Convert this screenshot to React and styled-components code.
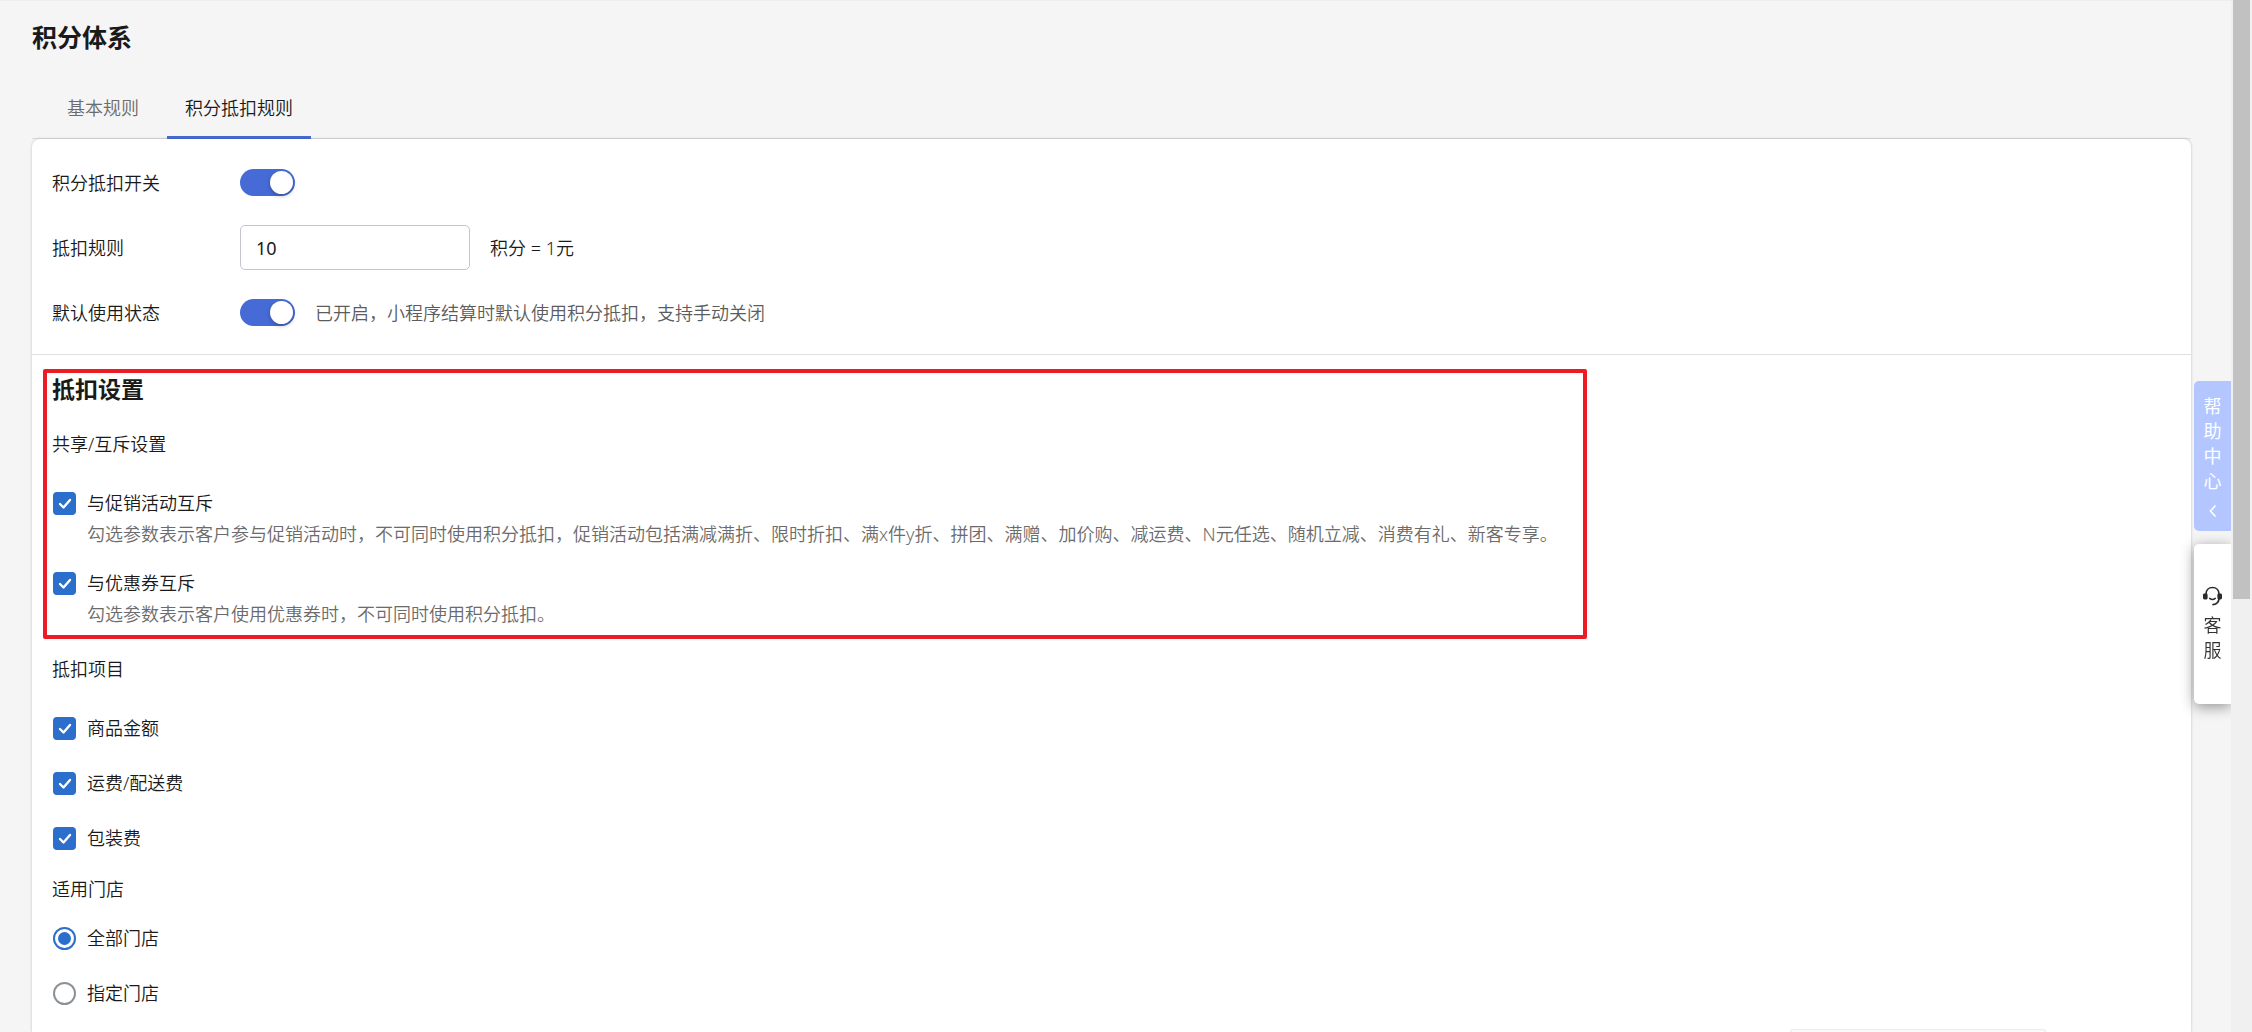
import React, { useState } from "react";
import styled, { createGlobalStyle } from "styled-components";

const GlobalStyle = createGlobalStyle`
  *, *::before, *::after { box-sizing: border-box; }
  body {
    margin: 0;
    background: #f5f5f5;
    color: #1a1a1a;
    font-family: "Noto Sans", "Noto Sans CJK SC", sans-serif;
    font-size: 18px;
    font-weight: 350;
    line-height: 24px;
  }
  h1, h2, h3, p { margin: 0; }
  button, input { font: inherit; color: inherit; }
`;

const Page = styled.div`
  display: flex;
  height: 100vh;
  overflow: hidden;
`;

const Main = styled.main`
  display: flex;
  flex: 1;
  flex-direction: column;
  min-width: 0;
  padding: 0 40px 0 32px;
  border-top: 1px solid #eeeeee;
`;

const PageTitle = styled.h1`
  padding-top: 20px;
  font-size: 25px;
  line-height: 32px;
  font-weight: 700;
`;

const TabList = styled.div`
  display: flex;
  gap: 10px;
  margin-top: 22px;
  padding-left: 17px;
  border-bottom: 1px solid #dddddd;
`;

const Tab = styled.button`
  height: 64px;
  margin-bottom: -1px;
  padding: 4px 18px 0;
  border: 0;
  border-bottom: 3px solid ${(p) => (p.$active ? "#466bd6" : "transparent")};
  border-radius: 2px 2px 0 0;
  background: none;
  color: ${(p) => (p.$active ? "#1a1a1a" : "#6b6b6b")};
`;

const Card = styled.div`
  flex: 1 0 auto;
  border-radius: 8px 8px 0 0;
  background: #ffffff;
  box-shadow: 0 0 3px rgba(0, 0, 0, 0.22);
`;

const RuleSection = styled.section`
  padding: 11px 20px 9px;
  border-bottom: 1px solid #e0e0e0;
`;

const FormRow = styled.div`
  display: flex;
  align-items: center;
  gap: 20px;
  height: 65px;
`;

const RowLabel = styled.label`
  width: 168px;
`;

const Hint = styled.span`
  color: #5c5c5c;
`;

const Switch = styled.input`
  display: flex;
  width: 55px;
  height: 27px;
  margin: 0;
  padding: 2px;
  justify-content: ${(p) => (p.checked ? "flex-end" : "flex-start")};
  appearance: none;
  border-radius: 14px;
  background: ${(p) => (p.checked ? "#466bd6" : "#bdbdbd")};
  cursor: pointer;

  &::before {
    content: "";
    width: 23px;
    height: 23px;
    border-radius: 50%;
    background: #ffffff;
    box-shadow: 0 2px 4px rgba(0, 0, 0, 0.25);
  }
`;

const TextInput = styled.input`
  width: 230px;
  height: 45px;
  padding: 0 15px;
  border: 1px solid #c2c5cb;
  border-radius: 5px;
  background: #ffffff;
  font-weight: 400;
`;

const SettingSection = styled.section`
  position: relative;
  padding: 18px 20px 0;
`;

const SectionTitle = styled.h2`
  font-size: 23px;
  line-height: 32px;
  font-weight: 700;
`;

const GroupTitle = styled.h3`
  padding-top: ${(p) => p.$space}px;
  font-size: 18px;
  line-height: 24px;
  font-weight: 350;
`;

const OptionList = styled.div`
  display: flex;
  flex-direction: column;
  gap: ${(p) => p.$gap}px;
  padding-top: ${(p) => p.$space}px;
`;

const Option = styled.div`
  display: grid;
  grid-template-columns: 25px 1fr;
  column-gap: 10px;
  align-items: center;
  justify-items: start;
`;

const OptionNote = styled.p`
  grid-column: 2;
  margin-top: 7px;
  color: #6b6b6b;
`;

const TickBox = styled.span`
  display: grid;
  justify-self: center;

  & > * { grid-area: 1 / 1; }
`;

const Checkbox = styled.input`
  width: 23px;
  height: 23px;
  margin: 0;
  appearance: none;
  border: 2px solid ${(p) => (p.checked ? "#2c6ecb" : "#8c9196")};
  border-radius: 4px;
  background: ${(p) => (p.checked ? "#2c6ecb" : "#ffffff")};
`;

const Tick = styled.svg`
  pointer-events: none;
  visibility: ${(p) => (p.$shown ? "visible" : "hidden")};
`;

const Radio = styled.input`
  display: grid;
  place-items: center;
  justify-self: center;
  width: 23px;
  height: 23px;
  margin: 0;
  appearance: none;
  border: 2px solid ${(p) => (p.checked ? "#2c6ecb" : "#8c9196")};
  border-radius: 50%;
  background: #ffffff;

  &::before {
    content: "";
    width: 13px;
    height: 13px;
    border-radius: 50%;
    background: ${(p) => (p.checked ? "#2c6ecb" : "transparent")};
  }
`;

const Highlight = styled.div`
  position: absolute;
  top: 14px;
  left: 11px;
  width: 1544px;
  max-width: calc(100% - 22px);
  height: 270px;
  border: 4px solid #ed1c24;
  border-radius: 2px;
  pointer-events: none;
`;

const ScrollTrack = styled.div`
  width: 21px;
  padding: 0 2px;
  background: #f0f0f0;
`;

const ScrollThumb = styled.div`
  height: 58vh;
  background: #c1c1c1;
`;

const SideDock = styled.div`
  position: fixed;
  top: 381px;
  right: 21px;
  display: flex;
  flex-direction: column;
  gap: 13px;
`;

const SideButton = styled.button`
  display: flex;
  flex-direction: column;
  align-items: center;
  justify-content: center;
  gap: ${(p) => (p.$primary ? 0 : 7)}px;
  width: 37px;
  height: ${(p) => p.$height}px;
  padding: 0 9px;
  border: 0;
  border-radius: 5px 0 0 5px;
  background: ${(p) => (p.$primary ? "#b3c6ff" : "#ffffff")};
  box-shadow: ${(p) => (p.$primary ? "none" : "0 3px 14px rgba(0, 0, 0, 0.4)")};
  clip-path: inset(-30px 0 -30px -30px);
  color: ${(p) => (p.$primary ? "#ffffff" : "#333333")};
  font-weight: ${(p) => (p.$primary ? 400 : 350)};
  line-height: 25px;
`;

const SaveBar = styled.div`
  position: fixed;
  right: 206px;
  bottom: 0;
  width: 256px;
  height: 3px;
  border: 1px solid #ececec;
  border-bottom: 0;
  border-radius: 6px 6px 0 0;
  background: #fafafa;
`;

function CheckOption({ id, label, note }) {
  const [checked, setChecked] = useState(true);
  return (
    <Option>
      <TickBox>
        <Checkbox id={id} type="checkbox" checked={checked} onChange={() => setChecked(!checked)} />
        <Tick $shown={checked} width="23" height="23" viewBox="0 0 23 23" aria-hidden="true">
          <path d="M7 12 L10.5 15.5 L17 8" fill="none" stroke="#fff" strokeWidth="2.4" strokeLinecap="round" strokeLinejoin="round" />
        </Tick>
      </TickBox>
      <label htmlFor={id}>{label}</label>
      {note && <OptionNote>{note}</OptionNote>}
    </Option>
  );
}

function RadioOption({ id, label, value, selected, onSelect }) {
  return (
    <Option>
      <Radio id={id} type="radio" name="store" checked={selected === value} onChange={() => onSelect(value)} />
      <label htmlFor={id}>{label}</label>
    </Option>
  );
}

function HeadsetIcon() {
  return (
    <svg width="19" height="20" viewBox="0 0 19 20" aria-hidden="true">
      <path d="M3 8 C3 4 5.8 1.5 9.5 1.5 C13.2 1.5 16 4 16 8" fill="none" stroke="#2b2b2b" strokeWidth="1.7" />
      <path d="M16 12 C16 16 13.5 18.3 10 18.6" fill="none" stroke="#2b2b2b" strokeWidth="1.7" strokeLinecap="round" />
      <path d="M6.8 12.4 Q9.5 14.6 12.2 12.4" fill="none" stroke="#2b2b2b" strokeWidth="1.6" strokeLinecap="round" />
      <rect x="0" y="7.5" width="4.6" height="6" rx="1.4" fill="#2b2b2b" />
      <rect x="14.4" y="7.5" width="4.6" height="6" rx="1.4" fill="#2b2b2b" />
    </svg>
  );
}

function ChevronIcon() {
  return (
    <svg width="18" height="25" viewBox="0 0 18 25" aria-hidden="true">
      <path d="M11.5 11.5 L6.5 17 L11.5 22.5" fill="none" stroke="#fff" strokeWidth="1.6" />
    </svg>
  );
}

export default function App() {
  const [deduct, setDeduct] = useState(true);
  const [auto, setAuto] = useState(true);
  const [points, setPoints] = useState("10");
  const [store, setStore] = useState("all");

  return (
    <Page>
      <GlobalStyle />
      <Main>
        <PageTitle>积分体系</PageTitle>
        <TabList role="tablist">
          <Tab role="tab" aria-selected="false">基本规则</Tab>
          <Tab role="tab" aria-selected="true" $active>积分抵扣规则</Tab>
        </TabList>
        <Card>
          <RuleSection>
            <FormRow>
              <RowLabel htmlFor="deduct">积分抵扣开关</RowLabel>
              <Switch id="deduct" type="checkbox" role="switch" checked={deduct} onChange={() => setDeduct(!deduct)} />
            </FormRow>
            <FormRow>
              <RowLabel htmlFor="points">抵扣规则</RowLabel>
              <TextInput id="points" type="text" value={points} onChange={(e) => setPoints(e.target.value)} />
              <span>积分 = 1元</span>
            </FormRow>
            <FormRow>
              <RowLabel htmlFor="auto">默认使用状态</RowLabel>
              <Switch id="auto" type="checkbox" role="switch" checked={auto} onChange={() => setAuto(!auto)} />
              <Hint>已开启，小程序结算时默认使用积分抵扣，支持手动关闭</Hint>
            </FormRow>
          </RuleSection>
          <SettingSection>
            <SectionTitle>抵扣设置</SectionTitle>
            <GroupTitle $space={27}>共享/互斥设置</GroupTitle>
            <OptionList $space={35} $gap={25}>
              <CheckOption
                id="promo"
                label="与促销活动互斥"
                note="勾选参数表示客户参与促销活动时，不可同时使用积分抵扣，促销活动包括满减满折、限时折扣、满x件y折、拼团、满赠、加价购、减运费、N元任选、随机立减、消费有礼、新客专享。"
              />
              <CheckOption
                id="coupon"
                label="与优惠券互斥"
                note="勾选参数表示客户使用优惠券时，不可同时使用积分抵扣。"
              />
            </OptionList>
            <GroupTitle $space={31}>抵扣项目</GroupTitle>
            <OptionList $space={35} $gap={31}>
              <CheckOption id="goods" label="商品金额" />
              <CheckOption id="freight" label="运费/配送费" />
              <CheckOption id="packing" label="包装费" />
            </OptionList>
            <GroupTitle $space={27}>适用门店</GroupTitle>
            <OptionList $space={25} $gap={31} role="radiogroup">
              <RadioOption id="store-all" label="全部门店" value="all" selected={store} onSelect={setStore} />
              <RadioOption id="store-some" label="指定门店" value="some" selected={store} onSelect={setStore} />
            </OptionList>
            <Highlight />
          </SettingSection>
        </Card>
      </Main>
      <ScrollTrack>
        <ScrollThumb />
      </ScrollTrack>
      <SideDock>
        <SideButton $height={150} $primary>
          <span>帮助中心</span>
          <ChevronIcon />
        </SideButton>
        <SideButton $height={160}>
          <HeadsetIcon />
          <span>客服</span>
        </SideButton>
      </SideDock>
      <SaveBar />
    </Page>
  );
}
